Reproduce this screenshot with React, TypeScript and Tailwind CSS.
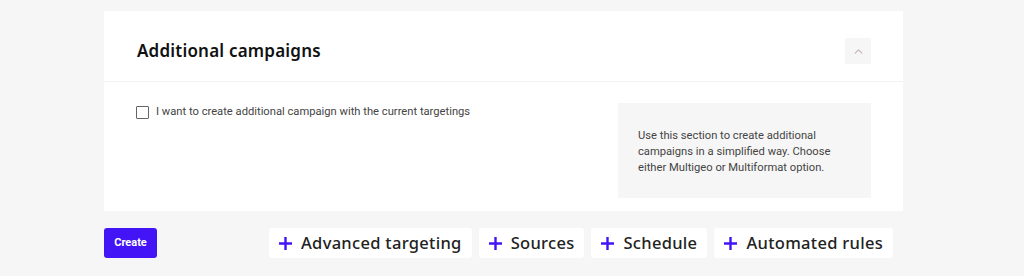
import { ChevronUp } from "lucide-react";

const extras = ["Advanced targeting", "Sources", "Schedule", "Automated rules"];

function PlusIcon() {
  return (
    <svg width="13" height="13" viewBox="0 0 13 13" className="shrink-0">
      <path d="M6.5 1v11M1 6.5h11" stroke="#4314f5" strokeWidth="2.4" strokeLinecap="square" />
    </svg>
  );
}

export default function App() {
  return (
    <div className="w-[1024px] h-[276px] bg-[#f6f6f6] pt-[11px] pl-[104px] font-['Roboto',sans-serif]">
      <div className="w-[799px] bg-white">
        {/* Header */}
        <div className="h-[71px] flex items-center justify-between pt-[10px] pl-[33px] pr-[32px] border-b border-[#f2f2f2]">
          <h2 className="text-[17px] font-semibold text-[#111] font-['Noto_Sans',sans-serif] tracking-[0.2px]">
            Additional campaigns
          </h2>
          <button className="w-[26px] h-[26px] bg-[#f6f6f6] flex items-center justify-center">
            <ChevronUp size={13} strokeWidth={2} className="text-[#c4b2b8]" />
          </button>
        </div>

        {/* Body */}
        <div className="flex justify-between pl-[32px] pr-[32px] pt-[21px] pb-[13px]">
          <label className="flex items-start gap-[7px] pt-[1px]">
            <span className="mt-[2px] w-[13px] h-[13px] border-[1.5px] border-[#666] rounded-[1px] bg-white" />
            <span className="text-[11.2px] leading-[16px] text-[#444]">
              I want to create additional campaign with the current targetings
            </span>
          </label>
          <div className="w-[253px] h-[95px] bg-[#f6f6f6] flex items-center px-5 pt-[2px]">
            <p className="text-[11.2px] leading-[16px] text-[#444]">
              Use this section to create additional campaigns in a simplified way. Choose either Multigeo or Multiformat option.
            </p>
          </div>
        </div>
      </div>

      {/* Footer actions */}
      <div className="flex items-center mt-[17px]">
        <button className="w-[53px] h-[30px] rounded-[3px] bg-[#4314f5] text-white text-[11px] font-bold">
          Create
        </button>
        <div className="flex gap-[7px] ml-[112px]">
          {extras.map((label) => (
            <button
              key={label}
              className="h-[30px] flex items-center gap-[9px] px-[10px] bg-white rounded-[3px] text-[16.5px] font-medium tracking-[0.3px] text-[#222] font-['Noto_Sans',sans-serif]"
            >
              <PlusIcon />
              {label}
            </button>
          ))}
        </div>
      </div>
    </div>
  );
}
